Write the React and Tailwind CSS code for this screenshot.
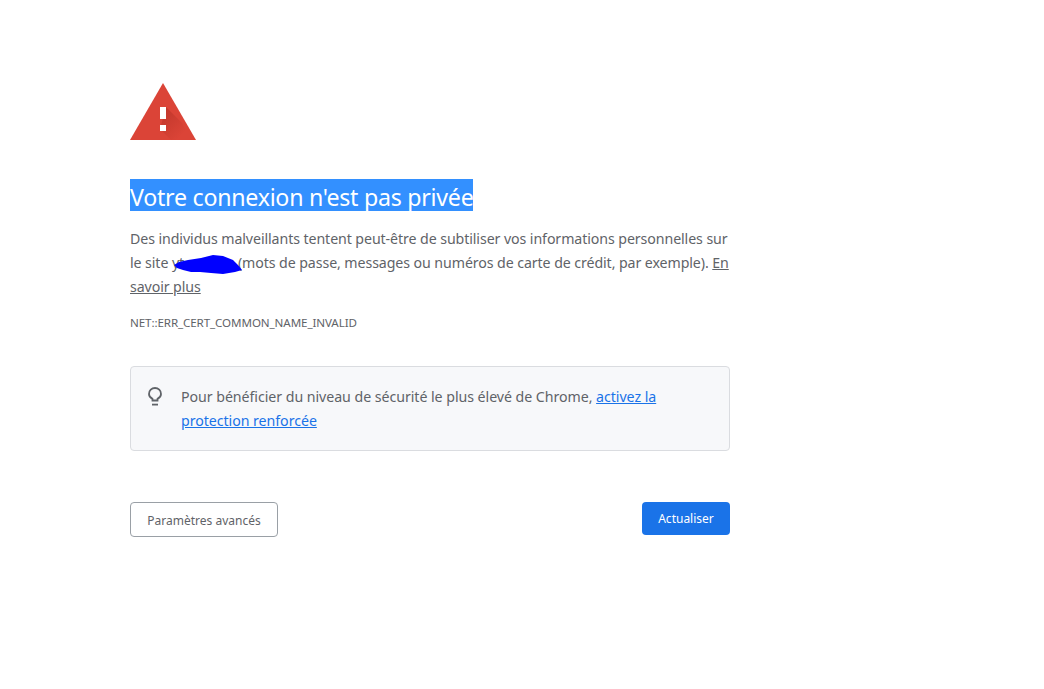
import React from 'react';

const font = { fontFamily: '"Noto Sans", sans-serif' };

function WarningIcon() {
  return (
    <svg width="66" height="57" viewBox="0 0 66 57" className="block">
      <defs>
        <linearGradient id="shade" x1="0.1" y1="0.1" x2="0.75" y2="0.8">
          <stop offset="0" stopColor="#8c1c13" stopOpacity="0.32" />
          <stop offset="1" stopColor="#8c1c13" stopOpacity="0" />
        </linearGradient>
      </defs>
      <path d="M33 0L66 57H0Z" fill="#DB4437" />
      <path d="M36 24L52 40L61 57H41L30 46Z" fill="url(#shade)" />
      <rect x="30" y="24" width="6" height="12" fill="#fff" />
      <rect x="30" y="42" width="6" height="6" fill="#fff" />
    </svg>
  );
}

function BulbIcon() {
  return (
    <svg width="14" height="20" viewBox="0 0 14 20" fill="none" stroke="#5f6368" strokeWidth="1.8" className="block">
      <path d="M4.5 13.5v-1.6C2.6 10.8 1 9.2 1 6.9 1 3.6 3.7 1 7 1s6 2.6 6 5.9c0 2.3-1.6 3.9-3.5 5v1.6Z" />
      <path d="M4 17.6h6" />
    </svg>
  );
}

function Scribble() {
  return (
    <svg width="70" height="20" viewBox="0 0 70 20" className="absolute left-[43px] top-[28px]">
      <path d="M1 10L6 7L15 5L28 3L40 0L50 1L60 5L65 10L69 15L62 17L50 19L38 18L27 17L18 17L10 15L4 13Z" fill="#0000ff" />
    </svg>
  );
}

export default function App() {
  return (
    <div className="min-h-screen bg-white" style={font}>
      <div className="ml-[130px] w-[600px] pt-[83px] text-[#5f6368]">
        <WarningIcon />

        <h1 className="mt-[39px] h-[32px] text-[23.2px] font-normal leading-[32px] whitespace-nowrap">
          <span className="inline-block h-[32px] bg-[#3390ff] pt-[2px] text-white tracking-[-0.26px]">Votre connexion n'est pas privée</span>
        </h1>

        <p className="relative mt-[16px] text-[14.2px] leading-[24px] whitespace-nowrap tracking-[-0.09px]">
          Des individus malveillants tentent peut-être de subtiliser vos informations personnelles sur
          <br />
          le site <span className="inline-block w-[66px]">yt</span>(mots de passe, messages ou numéros de carte de crédit, par exemple). <a className="underline">En</a>
          <br />
          <a className="underline">savoir plus</a>
          <Scribble />
        </p>

        <div className="mt-[12px] text-[11.6px] leading-[24px] tracking-[-0.1px]">NET::ERR_CERT_COMMON_NAME_INVALID</div>

        <div className="mt-[31px] flex h-[85px] gap-[19px] rounded-[4px] border border-[#dadce0] bg-[#f7f8fa] pl-[17px] pt-[18px]">
          <div className="pt-[2px]">
            <BulbIcon />
          </div>
          <p className="text-[14.2px] leading-[24px] whitespace-nowrap tracking-[-0.05px]">
            Pour bénéficier du niveau de sécurité le plus élevé de Chrome, <a className="text-[#1a73e8] underline">activez la</a>
            <br />
            <a className="text-[#1a73e8] underline">protection renforcée</a>
          </p>
        </div>

        <div className="mt-[51px] flex items-start justify-between">
          <button className="h-[35px] w-[148px] rounded-[4px] border border-[#9aa0a6] bg-white pt-[2px] text-[12px] text-[#5f6368]">
            Paramètres avancés
          </button>
          <button className="h-[33px] w-[88px] rounded-[4px] bg-[#1a73e8] text-[12px] text-white">
            Actualiser
          </button>
        </div>
      </div>
    </div>
  );
}
